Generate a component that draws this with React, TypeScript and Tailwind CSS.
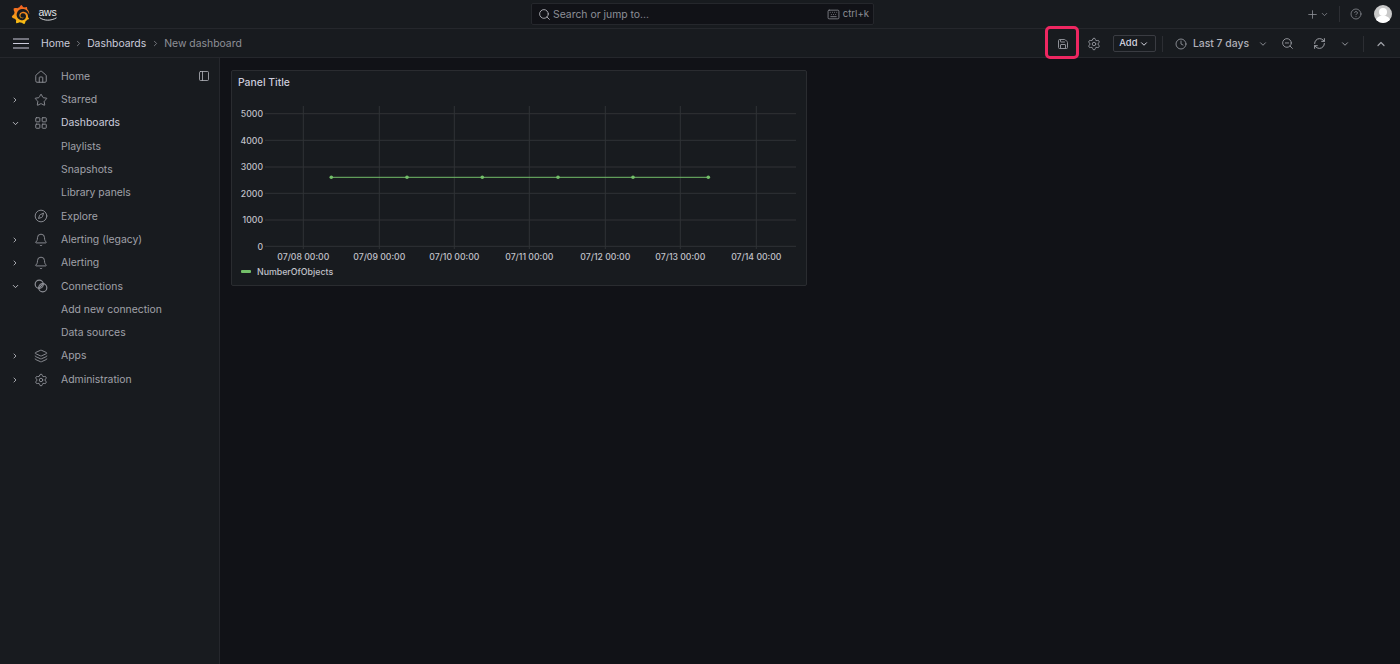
import React from "react";
import { Bell, ChevronDown, ChevronRight, ChevronUp, CircleHelp, Clock, Compass, House, Keyboard, Layers, LayoutGrid, PanelLeft, Plus, RefreshCw, Save, Search, Settings, Star, ZoomOut } from "lucide-react";
import { SiGrafana } from "react-icons/si";

const ConnIcon = ({ size = 14 }: { size?: number }) => (
  <svg width={size} height={size} viewBox="0 0 24 24" fill="none" stroke="currentColor" strokeWidth="2">
    <circle cx="9" cy="9" r="7" />
    <circle cx="15" cy="15" r="7" />
    <path d="M9 15 15 9" />
  </svg>
);

type Item = { label: string; icon?: React.ReactNode; arrow?: "r" | "d"; active?: boolean };
const ic = 14;
const sw = 1.6;
const items: Item[] = [
  { label: "Home", icon: <House size={ic} strokeWidth={sw} /> },
  { label: "Starred", icon: <Star size={ic} strokeWidth={sw} />, arrow: "r" },
  { label: "Dashboards", icon: <LayoutGrid size={ic} strokeWidth={sw} />, arrow: "d", active: true },
  { label: "Playlists" },
  { label: "Snapshots" },
  { label: "Library panels" },
  { label: "Explore", icon: <Compass size={ic} strokeWidth={sw} /> },
  { label: "Alerting (legacy)", icon: <Bell size={ic} strokeWidth={sw} />, arrow: "r" },
  { label: "Alerting", icon: <Bell size={ic} strokeWidth={sw} />, arrow: "r" },
  { label: "Connections", icon: <ConnIcon />, arrow: "d" },
  { label: "Add new connection" },
  { label: "Data sources" },
  { label: "Apps", icon: <Layers size={ic} strokeWidth={sw} />, arrow: "r" },
  { label: "Administration", icon: <Settings size={ic} strokeWidth={sw} />, arrow: "r" },
];

const ys = [5000, 4000, 3000, 2000, 1000, 0];
const gy = [42.7, 69.3, 96, 122.3, 149, 175.3];
const vx = [71.3, 147.3, 222.3, 297.3, 373.3, 448.3, 524.3];
const dates = ["07/08 00:00", "07/09 00:00", "07/10 00:00", "07/11 00:00", "07/12 00:00", "07/13 00:00", "07/14 00:00"];
const pts = [99.3, 175, 250.3, 326, 401, 476.3];

export default function App() {
  return (
    <div className="h-[664px] w-[1400px] overflow-hidden bg-[#111217] text-[10.4px] text-[#ccccdc] flex flex-col" style={{ fontFamily: "Inter, 'Noto Sans', sans-serif" }}>
      <header className="h-[29px] shrink-0 bg-[#181b1f] border-b border-[#25272c] flex items-center relative">
        <div className="w-[531px] flex items-center pl-[11px]">
          <svg width="0" height="0" className="absolute">
            <defs>
              <linearGradient id="gf" x1="0" y1="1" x2="0" y2="0">
                <stop offset="0" stopColor="#f9c712" />
                <stop offset="1" stopColor="#f15a24" />
              </linearGradient>
            </defs>
          </svg>
          <SiGrafana size={19} style={{ fill: "url(#gf)" }} />
          <div className="ml-[8px] flex flex-col items-center leading-none text-[#e6e7ea] w-[19px] mt-[1px]">
            <span className="text-[10.5px] font-medium leading-[9px] tracking-[-0.2px]" style={{ fontFamily: "'Liberation Sans', sans-serif" }}>aws</span>
            <svg width="18" height="4" viewBox="0 0 18 4" fill="none" stroke="#e6e7ea" strokeWidth="0.9"><path d="M0.5 0.5C5 4 12 4 17.5 0.8" /></svg>
          </div>
        </div>
        <div className="w-[343px] h-[22px] bg-[#111217] border border-[#25272c] rounded-[2px] flex items-center pl-[6px] pr-[4px] text-[#8b8d94]">
          <Search size={13} strokeWidth={1.6} className="text-[#b5b6bd]" />
          <span className="ml-[2px] pt-[1px] text-[#8e9097]">Search or jump to...</span>
          <Keyboard size={13} strokeWidth={1.5} className="ml-auto mr-[3px]" />
          <span className="text-[9.6px]">ctrl+k</span>
        </div>
        <div className="flex-1 flex items-center text-[#8e9097]">
          <Plus size={13} strokeWidth={1.5} className="ml-[432px]" />
          <ChevronDown size={9} className="ml-[1px]" />
          <div className="w-px h-[16px] bg-[#2c2e33] ml-[10px]" />
          <CircleHelp size={12} strokeWidth={1.5} className="ml-[10px]" />
          <div className="ml-[12px] w-[18px] h-[18px] rounded-full bg-[#c9c9c9] overflow-hidden">
            <svg viewBox="0 0 18 18" width="18" height="18"><circle cx="9" cy="7" r="4" fill="#fff" /><ellipse cx="9" cy="16.5" rx="7.5" ry="6" fill="#fff" /></svg>
          </div>
        </div>
      </header>

      <div className="h-[29px] shrink-0 bg-[#181b1f] border-b border-[#25272c] flex items-center relative pt-[1px]">
        <svg width="16" height="11" viewBox="0 0 16 11" fill="none" stroke="#ccccdc" strokeWidth="1.2" className="ml-[13px]"><path d="M0 1h16M0 5.5h16M0 10h16" /></svg>
        <nav className="ml-[12px] flex items-center">
          <span>Home</span>
          <ChevronRight size={9} className="mx-[4px] text-[#8e9097]" />
          <span>Dashboards</span>
          <ChevronRight size={9} className="mx-[4.5px] text-[#8e9097]" />
          <span className="text-[#8e9097]">New dashboard</span>
        </nav>
        <div className="ml-auto flex items-center text-[#a0a2a9]">
          <Save size={12} strokeWidth={2} className="text-[#8e9097]" />
          <Settings size={14} strokeWidth={1.7} className="ml-[18px] text-[#8e9097]" />
          <div className="ml-[12px] w-[43px] h-[17px] border border-[#3a3c42] rounded-[2px] flex items-center justify-center text-[#d6d7e0] font-medium text-[9.4px]">Add<ChevronDown size={10} strokeWidth={2.4} className="ml-[2px]" /></div>
          <div className="w-px h-[16px] bg-[#2c2e33] ml-[6px]" />
          <Clock size={12} strokeWidth={1.6} className="ml-[12px]" />
          <span className="ml-[6px] text-[#b0b1b9] font-medium">Last 7 days</span>
          <ChevronDown size={10} className="ml-[9px]" />
          <ZoomOut size={13} strokeWidth={1.6} className="ml-[13px]" />
          <RefreshCw size={13} strokeWidth={1.8} className="ml-[19px]" />
          <ChevronDown size={10} strokeWidth={2.2} className="ml-[14px]" />
          <div className="w-px h-[16px] bg-[#2c2e33] ml-[13px]" />
          <ChevronUp size={12} strokeWidth={2.4} className="ml-[11px] mr-[13px]" />
        </div>
        <div className="absolute left-[1045px] top-[-3px] w-[34px] h-[33px] border-[3px] border-[#ee2761] rounded-[5px]" />
      </div>

      <div className="flex-1 flex min-h-0">
        <aside className="w-[220px] shrink-0 bg-[#181b1f] border-r border-[#25272c] pt-[7px] relative text-[#a0a1a9]">
          <PanelLeft size={12} strokeWidth={1.6} className="absolute left-[198px] top-[12px] text-[#b5b6bd]" />
          {items.map((it) => (
            <div key={it.label} className="h-[23.31px] flex items-center">
              <div className="w-[29px] pl-[11px] text-[#c4c5cc]">
                {it.arrow === "r" && <ChevronRight size={8} strokeWidth={2.4} />}
                {it.arrow === "d" && <ChevronDown size={9} strokeWidth={2.4} />}
              </div>
              <div className="w-[32px] pl-[5px] text-[#8e9097]">{it.icon}</div>
              <span className={it.active ? "text-[#ccccdc]" : ""}>{it.label}</span>
            </div>
          ))}
        </aside>
        <main className="flex-1 pl-[11px] pt-[12px]">
          <section className="w-[576px] h-[216px] bg-[#181b1f] border border-[#2a2c30] rounded-[2px] relative">
            <div className="absolute left-[6px] top-[4px] font-medium text-[#ccccdc]">Panel Title</div>
            <svg width="574" height="192" viewBox="0 0 574 192" className="block">
              {gy.map((y, i) => (
                <g key={y}>
                  <line x1="33" x2="564" y1={y} y2={y} stroke="#303236" />
                  <text x="31" y={y + 3.2} textAnchor="end" fontSize="8.7" fontWeight="500" fill="#c0c1c9">{ys[i]}</text>
                </g>
              ))}
              {vx.map((x, i) => (
                <g key={x}>
                  <line x1={x} x2={x} y1="35" y2="178" stroke="#303236" />
                  <text x={x} y="189" textAnchor="middle" fontSize="8.7" fontWeight="500" fill="#c0c1c9">{dates[i]}</text>
                </g>
              ))}
              <line x1="99.3" x2="476.3" y1="106.3" y2="106.3" stroke="#73bf69" strokeWidth="1" />
              {pts.map((x) => <circle key={x} cx={x} cy="106.3" r="1.8" fill="#73bf69" />)}
            </svg>
            <div className="h-[17px] flex items-center pl-[9px] text-[8.8px] font-medium text-[#c0c1c9]">
              <div className="w-[10px] h-[3px] rounded-[1px] bg-[#73bf69] mr-[6px]" />NumberOfObjects
            </div>
          </section>
        </main>
      </div>
    </div>
  );
}
